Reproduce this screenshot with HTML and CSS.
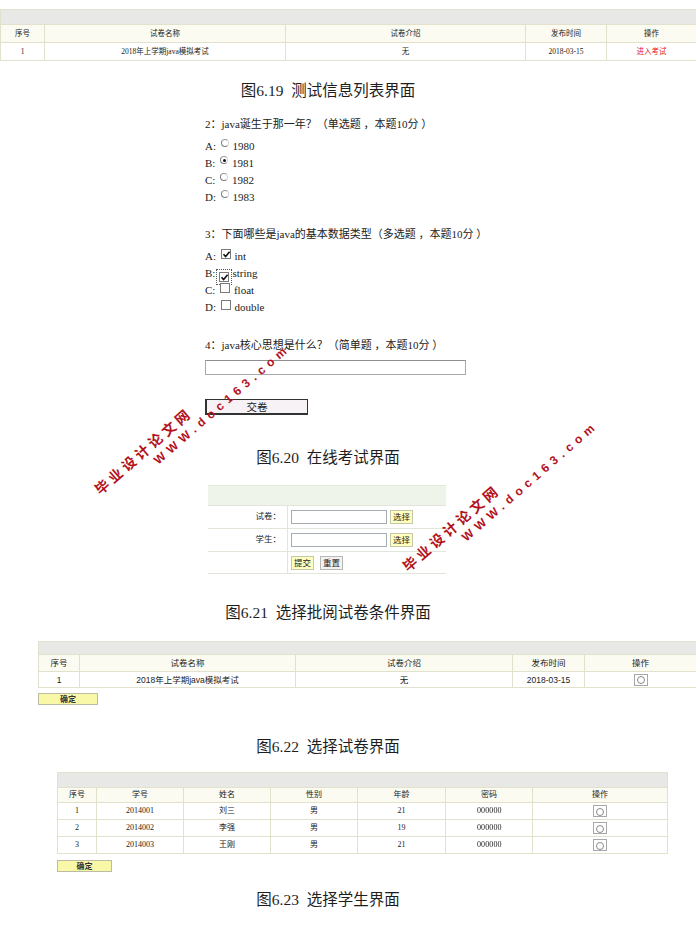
FILE: index.html
```html
<!DOCTYPE html>
<html lang="zh-CN">
<head>
<meta charset="utf-8">
<meta name="format-detection" content="telephone=no">
<title>界面截图</title>
<link rel="stylesheet" href="styles.css">
</head>
<body>
<div class="page">

  <table class="grid g1">
    <colgroup><col class="w44"><col class="w241"><col class="w240"><col class="w81"><col class="w90"></colgroup>
    <tr class="band"><td colspan="5"></td></tr>
    <tr class="head"><td>序号</td><td>试卷名称</td><td>试卷介绍</td><td>发布时间</td><td>操作</td></tr>
    <tr class="row"><td>1</td><td>2018年上学期java模拟考试</td><td>无</td><td>2018-03-15</td><td class="red">进入考试</td></tr>
  </table>

  <p class="cap c1">图6.19&nbsp; 测试信息列表界面</p>

  <div class="exam">
    <div class="q q2">2：java诞生于那一年？（单选题 ，本题10分 ）</div>
    <div class="opts">
      <div class="opt">A: <span class="radio"></span> 1980</div>
      <div class="opt">B: <span class="radio on"></span> 1981</div>
      <div class="opt">C: <span class="radio"></span> 1982</div>
      <div class="opt">D: <span class="radio"></span> 1983</div>
    </div>
    <div class="q q3">3：下面哪些是java的基本数据类型（多选题 ，本题10分 ）</div>
    <div class="opts">
      <div class="opt">A: <span class="check on"><svg viewBox="0 0 9 9" width="9" height="9"><path d="M1.5 4.2 L3.6 6.6 L7.6 1.8" fill="none" stroke="#111" stroke-width="1.6"/></svg></span> int</div>
      <div class="opt">B:<span class="focus"><span class="check on"><svg viewBox="0 0 9 9" width="9" height="9"><path d="M1.5 4.2 L3.6 6.6 L7.6 1.8" fill="none" stroke="#111" stroke-width="1.6"/></svg></span></span>string</div>
      <div class="opt">C: <span class="check"></span> float</div>
      <div class="opt">D: <span class="check"></span> double</div>
    </div>
    <div class="q q4">4：java核心思想是什么？（简单题 ，本题10分 ）</div>
    <div class="answer"></div>
    <div class="submit">交卷</div>
  </div>

  <p class="cap c2">图6.20&nbsp; 在线考试界面</p>

  <div class="form">
    <div class="fband"></div>
    <div class="frow"><div class="flabel">试卷：</div><div class="fcell"><span class="field"></span><span class="ybtn">选择</span></div></div>
    <div class="frow"><div class="flabel">学生：</div><div class="fcell"><span class="field"></span><span class="ybtn">选择</span></div></div>
    <div class="frow"><div class="flabel"></div><div class="fcell"><span class="ybtn">提交</span><span class="gbtn">重置</span></div></div>
  </div>

  <p class="cap c3">图6.21&nbsp; 选择批阅试卷条件界面</p>

  <table class="grid g2">
    <colgroup><col class="w41"><col class="w216"><col class="w217"><col class="w72"><col class="w112"></colgroup>
    <tr class="band"><td colspan="5"></td></tr>
    <tr class="head"><td>序号</td><td>试卷名称</td><td>试卷介绍</td><td>发布时间</td><td>操作</td></tr>
    <tr class="row"><td>1</td><td>2018年上学期java模拟考试</td><td>无</td><td>2018-03-15</td><td><span class="pick"></span></td></tr>
  </table>
  <div class="ok ok2">确定</div>

  <p class="cap c4">图6.22&nbsp; 选择试卷界面</p>

  <table class="grid g3">
    <colgroup><col class="w39"><col class="w87"><col class="w87"><col class="w87"><col class="w88"><col class="w87"><col class="w135"></colgroup>
    <tr class="band"><td colspan="7"></td></tr>
    <tr class="head"><td>序号</td><td>学号</td><td>姓名</td><td>性别</td><td>年龄</td><td>密码</td><td>操作</td></tr>
    <tr class="row"><td>1</td><td>2014001</td><td>刘三</td><td>男</td><td>21</td><td><span class="num">000000</span></td><td><span class="pick"></span></td></tr>
    <tr class="row"><td>2</td><td>2014002</td><td>李强</td><td>男</td><td>19</td><td><span class="num">000000</span></td><td><span class="pick"></span></td></tr>
    <tr class="row"><td>3</td><td>2014003</td><td>王刚</td><td>男</td><td>21</td><td><span class="num">000000</span></td><td><span class="pick"></span></td></tr>
  </table>
  <div class="ok ok3">确定</div>

  <p class="cap c5">图6.23&nbsp; 选择学生界面</p>

  <div class="mark m1">
    <div class="mk-cn">毕业设计论文网</div>
    <div class="mk-en">WWW.doc163.com</div>
  </div>
  <div class="mark m2">
    <div class="mk-cn">毕业设计论文网</div>
    <div class="mk-en">WWW.doc163.com</div>
  </div>
</div>
</body>
</html>
```

FILE: styles.css
```css
html, body {
  margin: 0;
  padding: 0;
  background: #ffffff;
}
.page {
  position: relative;
  width: 696px;
  height: 926px;
  overflow: hidden;
  color: #222;
  font-family: "Liberation Serif", "Noto Sans CJK SC", serif;
}

/* ---------- tables ---------- */
.grid {
  border-collapse: collapse;
  table-layout: fixed;
}
.grid td {
  padding: 0;
  border: 1px solid #e2e2cc;
  text-align: center;
  vertical-align: middle;
  white-space: nowrap;
  overflow: hidden;
  color: #222;
}
.grid .num {
  display: inline-block;
  color: #222;
  text-decoration: none;
  letter-spacing: 0.1px;
  will-change: transform;
}
.grid .band td { background: #e8e8e6; }
.grid .head td { background: #fbfbf1; }
.grid .row td { background: #ffffff; }

.g1 { margin-top: 9px; width: 696px; font-size: 7.5px; line-height: 10px; }
.g1 .band { height: 15px; }
.g1 .head, .g1 .row { height: 18px; }
.grid td.red { color: #e0201c; }

.w44 { width: 44px; } .w241 { width: 241px; } .w240 { width: 240px; } .w81 { width: 81px; } .w90 { width: 90px; }
.w41 { width: 41px; } .w216 { width: 216px; } .w217 { width: 217px; } .w72 { width: 72px; } .w112 { width: 112px; }
.w39 { width: 39px; } .w87 { width: 87px; } .w88 { width: 88px; } .w135 { width: 135px; }

.g2 {
  margin-top: 18px;
  margin-left: 38px;
  width: 658px;
  font-family: "Liberation Sans", "Noto Sans CJK SC", sans-serif;
  font-size: 8.5px;
  line-height: 10px;
}
.g2 .band { height: 13px; }
.g2 .head { height: 17px; }
.g2 .row { height: 16px; }

.g3 {
  margin-top: 15px;
  margin-left: 57px;
  width: 610px;
  font-size: 8px;
  line-height: 10px;
}
.g3 .band { height: 15px; }
.g3 .head { height: 15px; }
.g3 .row { height: 17px; }

.pick {
  display: inline-block;
  vertical-align: middle;
  width: 12px;
  height: 10px;
  border: 1px solid #a8a8a8;
  background: #fff;
  position: relative;
}
.pick::after {
  content: "";
  position: absolute;
  left: 2px;
  top: 1.5px;
  width: 6px;
  height: 6px;
  border: 1px solid #8a8a8a;
  border-radius: 50%;
}

.ok {
  box-sizing: border-box;
  height: 12px;
  background: #f8f8a8;
  border: 1px solid #bcbca4;
  font-family: "Noto Sans CJK SC", sans-serif;
  font-size: 8px;
  line-height: 10px;
  font-weight: bold;
  color: #333;
  text-align: center;
}
.ok2 { margin: 5px 0 0 38px; width: 60px; }
.ok3 { margin: 6px 0 0 57px; width: 55px; }

/* ---------- captions ---------- */
.cap {
  margin: 0;
  padding-right: 40px;
  height: 20px;
  line-height: 20px;
  font-size: 15.5px;
  text-align: center;
  color: #1e1e1e;
}
.c1 { margin-top: 20px; }
.c2 { margin-top: 33px; }
.c3 { margin-top: 29px; }
.c4 { margin-top: 32px; }
.c5 { margin-top: 18px; }

/* ---------- exam ---------- */
.exam {
  padding-left: 205px;
  font-size: 11px;
}
.q {
  height: 16px;
  line-height: 16px;
  white-space: nowrap;
}
.q2 { margin-top: 15px; }
.q3 { margin-top: 20px; }
.q4 { margin-top: 21px; }
.opts { margin-top: 6px; }
.opt {
  height: 17px;
  line-height: 17px;
  white-space: nowrap;
}
.radio {
  display: inline-block;
  box-sizing: border-box;
  width: 8px;
  height: 8px;
  margin: 0 1px 0 2px;
  border: 1px solid #7d7d7d;
  border-right-color: #d6d6d6;
  border-top-color: #9a9a9a;
  border-radius: 50%;
  vertical-align: 3px;
  position: relative;
}
.radio.on::after {
  content: "";
  position: absolute;
  left: 1.5px;
  top: 1.5px;
  width: 3px;
  height: 3px;
  border-radius: 50%;
  background: #111;
}
.check {
  display: inline-block;
  box-sizing: border-box;
  width: 10px;
  height: 10px;
  margin: 0 1px 0 2px;
  border: 1px solid #7a7a7a;
  background: #fff;
  vertical-align: 1px;
  position: relative;
}
.check svg {
  position: absolute;
  left: 0;
  top: 0;
}
.focus {
  display: inline-block;
  box-sizing: border-box;
  width: 16px;
  height: 16px;
  margin: 0 0 0 1px;
  border: 1px dotted #555;
  vertical-align: -3px;
  line-height: 12px;
  text-align: center;
}
.focus .check { margin: 2px 0 0 0; vertical-align: top; }
.answer {
  box-sizing: border-box;
  margin-top: 7px;
  width: 261px;
  height: 15px;
  border: 1px solid #a9a9a9;
  border-top-color: #8f8f8f;
  background: #fff;
}
.submit {
  box-sizing: border-box;
  margin-top: 24px;
  width: 103px;
  height: 16px;
  border: 1px solid #333;
  border-left-width: 2px;
  border-bottom-width: 2px;
  background: #f6f2f6;
  font-family: "Noto Sans CJK SC", sans-serif;
  font-size: 10.5px;
  line-height: 13px;
  text-align: center;
  color: #222;
}

/* ---------- form ---------- */
.form {
  margin-top: 17px;
  margin-left: 208px;
  width: 238px;
  font-family: "Liberation Sans", "Noto Sans CJK SC", sans-serif;
  font-size: 8px;
}
.fband {
  height: 20px;
  background: #eef4ea;
  border-top: 1px solid #e4e9dc;
  box-sizing: border-box;
}
.frow {
  display: flex;
  height: 23px;
  box-sizing: border-box;
  border-top: 1px solid #e2e6da;
}
.frow:last-child { border-bottom: 1px solid #e2e6da; }
.flabel {
  width: 80px;
  box-sizing: border-box;
  padding-right: 6px;
  border-right: 1px solid #e2e6da;
  text-align: right;
  line-height: 21px;
  font-size: 8.5px;
}
.fcell {
  display: flex;
  align-items: center;
  gap: 3px;
  padding-left: 3px;
}
.field {
  display: inline-block;
  box-sizing: border-box;
  width: 96px;
  height: 14px;
  border: 1px solid #a5acb2;
  background: #fff;
}
.ybtn, .gbtn {
  display: inline-block;
  box-sizing: border-box;
  height: 14px;
  padding: 0 2px;
  line-height: 12px;
  border: 1px solid #c6c6a8;
  background: #ffffc0;
  font-size: 8.5px;
}
.gbtn {
  margin-left: 3px;
  background: #f2f2f2;
  border-color: #b8b8b8;
}

/* ---------- watermark ---------- */
.mark {
  position: absolute;
  transform-origin: 0 0;
  transform: rotate(-41deg);
  color: #b3121c;
  font-weight: bold;
  white-space: nowrap;
}
.m1 { left: 91px; top: 485px; }
.m2 { left: 399px; top: 562px; }
.mk-cn {
  height: 16px;
  line-height: 16px;
  font-family: "Noto Sans CJK SC", sans-serif;
  font-size: 14px;
  letter-spacing: 3.7px;
}
.mk-en {
  margin-top: 1px;
  padding-left: 64px;
  height: 16px;
  line-height: 16px;
  font-family: "Liberation Sans", sans-serif;
  font-size: 12px;
  letter-spacing: 5px;
}
```
